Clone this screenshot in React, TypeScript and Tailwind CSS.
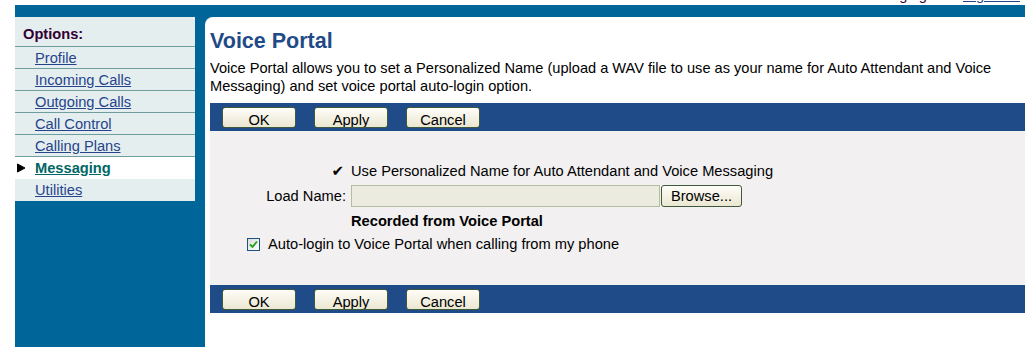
import React from 'react'

const font = { fontFamily: '"Liberation Sans", Arial, sans-serif' }

const navItems = ['Profile', 'Incoming Calls', 'Outgoing Calls', 'Call Control', 'Calling Plans', 'Messaging', 'Utilities']

function Btn({ label, w = 'w-[74px]' }: { label: string; w?: string }) {
  return (
    <button
      type="button"
      className={`${w} h-[21px] overflow-hidden rounded-[3px] border border-[#3f5a3a] bg-gradient-to-b from-[#fefdf8] to-[#ebe7d2] pt-[3px] text-center text-[14.67px] leading-[18px] text-black`}
    >
      {label}
    </button>
  )
}

function ButtonBar() {
  return (
    <div className="flex h-[28px] items-center gap-[18px] bg-[#1f4b89] pl-[12px]">
      <Btn label="OK" />
      <Btn label="Apply" />
      <Btn label="Cancel" />
    </div>
  )
}

export default function App() {
  return (
    <div className="h-[347px] w-[1032px] overflow-hidden bg-white" style={font}>
      {/* header text, mostly scrolled off the top */}
      <div className="h-[5px] overflow-hidden">
        <div className="-mt-[14px] flex justify-end gap-[36px] pr-[12px] text-[14.67px] leading-[18px]">
          <span className="text-[#330033]">Messaging</span>
          <span className="text-[#26448c] underline">Sign Out</span>
        </div>
      </div>

      <div className="ml-[15px] flex h-[342px] w-[1010px]">
        {/* left column */}
        <div className="w-[190px] bg-[#006699] pt-[12px] pr-[10px]">
          <div className="bg-[#e5eeee]">
            <div className="h-[30px] border-b border-[#6f9c9c] pl-[8px] pt-[8px] text-[14.67px] font-bold leading-[18px] text-[#330033]">
              Options:
            </div>
            {navItems.map((item, i) => {
              const active = item === 'Messaging'
              const last = i === navItems.length - 1
              return (
                <div
                  key={item}
                  className={`relative flex h-[22px] items-center pl-[20px] text-[14.67px] leading-[18px] ${active ? 'bg-white' : ''} ${!active && !last ? 'border-b border-[#6f9c9c]' : ''}`}
                >
                  {active && (
                    <svg className="absolute left-[1px] top-[6px]" width="10" height="10" viewBox="0 0 10 10">
                      <path d="M1.5 1 L9 5 L1.5 9 Z" fill="#000" stroke="#000" strokeWidth="1" strokeLinejoin="round" />
                    </svg>
                  )}
                  <a className={active ? 'font-bold text-[#006666] underline' : 'text-[#26448c] underline'}>{item}</a>
                </div>
              )
            })}
          </div>
        </div>

        {/* right column */}
        <div className="flex-1 bg-[#006699] pt-[12px]">
          <div className="h-full rounded-tl-[8px] bg-white pl-[5px]">
            <h1 className="pt-[12px] text-[21.5px] font-bold leading-[24px] text-[#1f4a88]">Voice Portal</h1>
            <p className="mt-[6px] pr-[20px] text-[14.6px] leading-[18px] text-black">
              Voice Portal allows you to set a Personalized Name (upload a WAV file to use as your name for Auto Attendant and Voice Messaging) and set voice portal auto-login option.
            </p>
            <div className="mt-[8px]">
              <ButtonBar />
            </div>

            <div className="h-[154px] bg-[#f2f0f0] pt-[31px] text-[14.67px] leading-[18px] text-black">
              <div className="grid grid-cols-[136px_1fr] gap-x-[5px] gap-y-[5px]">
                <div className="pr-[2px] text-right text-[15px]" style={{ fontFamily: '"DejaVu Sans", sans-serif' }}>
                  ✔
                </div>
                <div>Use Personalized Name for Auto Attendant and Voice Messaging</div>

                <div className="flex items-center justify-end">Load Name:</div>
                <div className="flex items-center">
                  <div className="h-[22px] w-[309px] border border-[#b3bf9a] bg-[#ecebe0]" />
                  <button
                    type="button"
                    className="ml-[1px] h-[22px] w-[81px] rounded-[3px] border border-[#3f5a3a] bg-gradient-to-b from-[#fefdf8] to-[#ebe7d2] text-center text-[14.67px] leading-[18px] text-black"
                  >
                    Browse...
                  </button>
                </div>

                <div />
                <div className="font-bold">Recorded from Voice Portal</div>

                <div className="col-span-2 flex items-center pl-[37px]">
                  <span className="flex h-[13px] w-[13px] items-center justify-center border border-[#1c5180] bg-gradient-to-br from-[#dcdcd6] to-white">
                    <svg width="9" height="9" viewBox="0 0 9 9">
                      <path d="M1 4.5 L3.5 7 L8 1.5" fill="none" stroke="#21a121" strokeWidth="1.8" />
                    </svg>
                  </span>
                  <span className="ml-[8px]">Auto-login to Voice Portal when calling from my phone</span>
                </div>
              </div>
            </div>

            <ButtonBar />
          </div>
        </div>
      </div>
    </div>
  )
}
